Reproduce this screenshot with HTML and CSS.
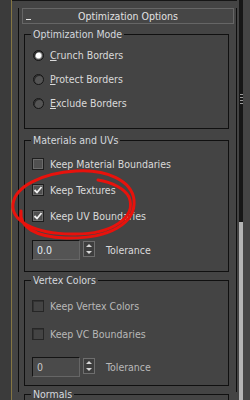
FILE: index.html
```html
<!DOCTYPE html>
<html lang="en">
<head>
    <meta charset="UTF-8">
    <meta name="viewport" content="width=device-width, initial-scale=1.0">
    <title>Optimization Options</title>
    <link rel="stylesheet" href="styles.css">
</head>
<body>
    <div class="viewport"></div>
    <div class="main">
        <div class="rollout">
            <div class="rollout-title">
                <span class="toggle"></span>
                <span class="title">Optimization Options</span>
            </div>

            <fieldset class="group group-mode">
                <legend>Optimization Mode</legend>
                <label class="row"><span class="radio on"></span><span><u>C</u>runch Borders</span></label>
                <label class="row"><span class="radio"></span><span><u>P</u>rotect Borders</span></label>
                <label class="row"><span class="radio"></span><span><u>E</u>xclude Borders</span></label>
            </fieldset>

            <fieldset class="group group-mat">
                <legend>Materials and UVs</legend>
                <label class="row"><span class="check"></span><span>Keep Material Boundaries</span></label>
                <label class="row"><span class="check on"><svg width="10" height="10" viewBox="0 0 10 10"><polyline points="1.5,5 4,7.5 8.5,2" /></svg></span><span>Keep Textures</span></label>
                <label class="row"><span class="check on"><svg width="10" height="10" viewBox="0 0 10 10"><polyline points="1.5,5 4,7.5 8.5,2" /></svg></span><span>Keep UV Boundaries</span></label>
                <div class="spin-row">
                    <span class="spin-field">0.0</span>
                    <span class="spin-btns"><i class="up"></i><i class="down"></i></span>
                    <span class="spin-label">Tolerance</span>
                </div>
            </fieldset>

            <fieldset class="group group-vc disabled">
                <legend>Vertex Colors</legend>
                <label class="row"><span class="check"></span><span>Keep Vertex Colors</span></label>
                <label class="row"><span class="check"></span><span>Keep VC Boundaries</span></label>
                <div class="spin-row">
                    <span class="spin-field">0</span>
                    <span class="spin-btns"><i class="up"></i><i class="down"></i></span>
                    <span class="spin-label">Tolerance</span>
                </div>
            </fieldset>

            <fieldset class="group group-normals">
                <legend>Normals</legend>
            </fieldset>
        </div>
    </div>
    <div class="scrollbar">
        <div class="thumb"><span class="grip"></span></div>
    </div>

    <!-- red marker scribble on top of the screenshot -->
    <svg class="markup" width="250" height="400" viewBox="0 0 250 400">
        <path d="M98 180 C112 182 125 189 129 197 C137 217 112 235 72 234 C33 234 11 220 13 204 C15 187 41 173 76 171 C107 169 132 181 134 200 C136 223 110 239 66 238 C35 237 19 227 21 211" />
    </svg>
</body>
</html>
```

FILE: styles.css
```css
html, body {
    margin: 0;
    padding: 0;
}
body {
    display: flex;
    height: 400px;
    overflow: hidden;
    background: #444444;
    font-family: 'DejaVu Sans Condensed', 'Liberation Sans', sans-serif;
    font-size: 10.5px;
    color: #dadada;
}
.viewport {
    width: 11px;
    flex: none;
    background: #3b3b3b;
    border-right: 1px solid #857642;
}
.main {
    box-sizing: border-box;
    width: 225px;
    height: 400px;
    flex: none;
    overflow: hidden;
    border-top: 1px solid #161616;
    padding-top: 15px;
}
.rollout {
    margin-left: 6px;
    height: 100%;
    border-left: 1px solid #0e0e0e;
    border-right: 1px solid #0e0e0e;
}
.rollout-title {
    display: grid;
    grid-template-columns: 1fr auto 1fr;
    height: 14px;
    margin: -8px 2px 0 3px;
    border: 1px solid #666666;
    background: #464646;
    line-height: 14px;
    color: #e2e2e2;
}
.toggle {
    align-self: end;
    width: 5px;
    height: 1px;
    margin: 0 0 3px 3px;
    background: #e6e6e6;
}
.group {
    margin: 0 7px 0 5px;
    padding: 0;
    border: 1px solid #101010;
    min-width: 0;
}
.group legend {
    margin-left: 6px;
    padding: 0 2px;
    line-height: 13px;
    color: #d4d8de;
}
.group-mode {
    margin-top: 4px;
    padding: 2px 0 13px;
}
.group-mat {
    margin-top: 5px;
    padding: 4px 0 11px;
}
.group-vc {
    margin-top: 2px;
    padding: 5px 0 8px;
}
.group-normals {
    margin-top: 2px;
    height: 40px;
}
.row {
    display: flex;
    align-items: center;
    gap: 6px;
    height: 24px;
    padding-left: 7px;
}
.group-mat .row {
    height: 26px;
}
.group-vc .row {
    height: 28px;
}
.radio {
    width: 9px;
    height: 9px;
    margin-left: 1px;
    border: 1px solid #151515;
    border-radius: 50%;
    background: #555555;
    box-shadow: inset 1px 1px 0 #2c2c2c;
}
.radio.on {
    background: radial-gradient(circle, #ffffff 0 2.5px, #b8b8b8 3px, #555555 4px);
}
.check {
    display: flex;
    align-items: center;
    justify-content: center;
    width: 10px;
    height: 10px;
    border: 1px solid #1e1e1e;
    background: #505050;
    box-shadow: inset 0 0 0 1px #6c6c6c;
}
.check svg polyline {
    fill: none;
    stroke: #f2f2f2;
    stroke-width: 1.8;
}
.spin-row {
    display: flex;
    align-items: center;
    height: 20px;
    padding-left: 7px;
}
.group-mat .spin-row {
    margin-top: 11px;
}
.group-vc .spin-row {
    margin-top: 9px;
}
.spin-field {
    box-sizing: border-box;
    width: 48px;
    height: 20px;
    padding: 2px 0 0 4px;
    border: 1px solid #141414;
    border-right-color: #666;
    border-bottom-color: #666;
    background: #545454;
    line-height: 14px;
    color: #e4ecf4;
}
.spin-btns {
    display: flex;
    flex-direction: column;
    justify-content: space-around;
    align-items: center;
    box-sizing: border-box;
    width: 12px;
    height: 16px;
    margin: 0 0 3px 3px;
    border: 1px solid #6e6e6e;
    background: #3e3e3e;
}
.spin-btns i {
    width: 0;
    height: 0;
    border-left: 3px solid transparent;
    border-right: 3px solid transparent;
}
.spin-btns .up {
    border-bottom: 3px solid #d8d8d8;
}
.spin-btns .down {
    border-top: 3px solid #d8d8d8;
}
.spin-label {
    margin-left: 11px;
}
.disabled .check {
    background: #444;
    border-color: #262626;
    box-shadow: inset 1px 1px 0 #333;
}
.disabled .row,
.disabled .spin-label {
    color: #b8b8b8;
}
.disabled .spin-field {
    background: #4a4a4a;
    color: #c8c8c8;
}
.scrollbar {
    width: 4px;
    flex: none;
    margin-left: 2px;
    display: flex;
    flex-direction: column;
    background: #b4b4b4;
}
.thumb {
    box-sizing: border-box;
    height: 222px;
    padding-top: 94px;
    display: flex;
    justify-content: center;
    background: #161616;
}
.grip {
    width: 3px;
    height: 11px;
    background: repeating-linear-gradient(#9a9a9a 0 1px, transparent 1px 3px);
}
.markup {
    position: absolute;
    left: 0;
    top: 0;
    pointer-events: none;
}
.markup path {
    fill: none;
    stroke: #e8120c;
    stroke-width: 3;
    stroke-linecap: round;
}
```
